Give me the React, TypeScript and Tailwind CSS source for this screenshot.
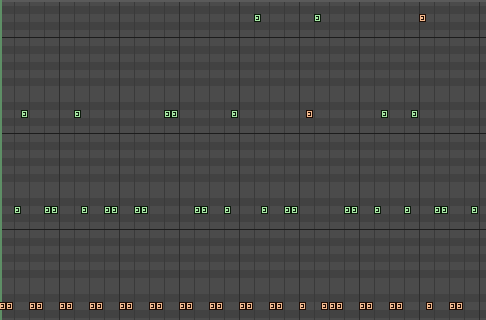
import React from 'react';

type Note = { k: number; row: number; hot?: boolean };

// row index -> top in px (all notes sit on the D rows)
const ROW_TOP = [14, 110, 206, 302];

const NOTES: Note[] = [
  { k: 34, row: 0 }, { k: 42, row: 0 }, { k: 56, row: 0, hot: true },
  ...[3, 10, 22, 23, 31, 51, 55].map((k) => ({ k, row: 1 })),
  { k: 41, row: 1, hot: true },
  ...[2, 6, 7, 11, 14, 15, 18, 19, 26, 27, 30, 35, 38, 39, 46, 47, 50, 54, 58, 59, 63].map((k) => ({ k, row: 2 })),
  ...[0, 1, 4, 5, 8, 9, 12, 13, 16, 17, 20, 21, 24, 25, 28, 29, 32, 33, 36, 37, 40, 43, 44, 45, 48, 49, 52, 53, 57, 60, 61].map(
    (k) => ({ k, row: 3, hot: true })
  ),
];

const BLACK = [1, 3, 6, 8, 10];

const KeyRow = ({ i }: { i: number }) => {
  const s = (((4 - i) % 12) + 12) % 12;
  const black = BLACK.includes(s);
  return (
    <div
      className={
        'h-2 shrink-0 ' +
        (black ? 'bg-[#424242] ' : 'bg-[#4b4b4b] ') +
        (s === 0 ? 'border-b border-[#1c1c1c]' : '')
      }
    />
  );
};

const NoteBlock = ({ note }: { note: Note }) => (
  <div
    className={
      'absolute h-2 w-[7px] border ' +
      (note.hot ? 'border-[#1f0d05] bg-[#f2b98e]' : 'border-[#0b1a0b] bg-[#a6e6a4]')
    }
    style={{ left: Math.floor(note.k * 7.5) - 1, top: ROW_TOP[note.row] }}
  >
    <div
      className={
        'absolute left-[1px] top-[1px] h-[4px] w-[3px] border-y border-r ' +
        (note.hot ? 'border-[#1f0d05]' : 'border-[#0b1a0b]')
      }
    />
  </div>
);

export default function App() {
  const cols = Array.from({ length: 33 }, (_, c) => c);
  return (
    <div className="relative h-[320px] w-[486px] overflow-hidden bg-[#4b4b4b]">
      {/* key bands */}
      <div className="-mt-[2px] flex flex-col">
        {Array.from({ length: 42 }, (_, i) => (
          <KeyRow key={i} i={i} />
        ))}
      </div>

      {/* beat lines */}
      <svg className="pointer-events-none absolute inset-0" width={486} height={320}>
        {cols.map((c) => {
          const x = c * 15 - 0.5;
          const major = c % 4 === 0;
          return (
            <line
              key={c}
              x1={x}
              x2={x}
              y1={0}
              y2={320}
              stroke={major ? '#2e2e2e' : '#3a3a3a'}
              strokeWidth={1}
            />
          );
        })}
        {[37.5, 133.5, 229.5].map((y) => (
          <line key={y} x1={0} x2={486} y1={y} y2={y} stroke="#1c1c1c" strokeWidth={1} />
        ))}
      </svg>

      {/* top edge strip */}
      <div className="absolute left-0 right-0 top-0 h-[2px] bg-[#5a5a5a]" />
      {/* play start marker */}
      <div className="absolute bottom-0 left-0 top-0 w-[2px] bg-[#5e8f66]" />

      {NOTES.map((n, idx) => (
        <NoteBlock key={idx} note={n} />
      ))}
    </div>
  );
}
